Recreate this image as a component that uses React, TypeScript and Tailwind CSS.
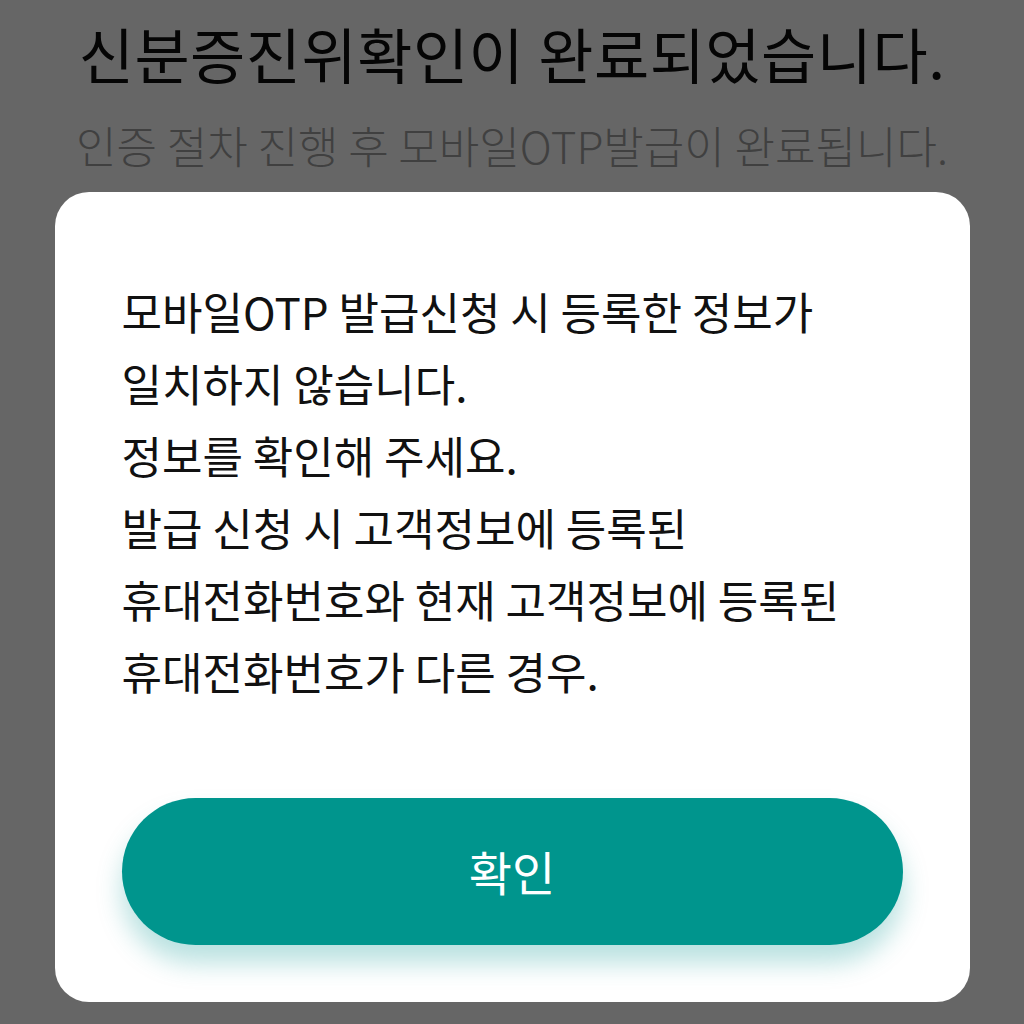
import React from "react";

export default function App() {
  const font = { fontFamily: '"Noto Sans CJK KR", "Noto Sans", sans-serif' };
  return (
    <div
      className="w-[1024px] h-[1024px] overflow-hidden bg-[#666666] flex flex-col items-center"
      style={font}
    >
      <h1 className="mt-[21px] text-[60px] leading-[64px] tracking-[0.5px] text-[#050505] font-normal whitespace-nowrap">
        신분증진위확인이 완료되었습니다.
      </h1>
      <p className="mt-[36px] text-[44px] leading-[48px] tracking-[0px] text-[#404040] font-light whitespace-nowrap">
        인증 절차 진행 후 모바일OTP발급이 완료됩니다.
      </p>
      <div className="mt-[23px] w-[915px] bg-white rounded-[34px] pt-[83px] pb-[57px] px-[67px] flex flex-col">
        <div className="text-[44px] leading-[72px] tracking-[0px] text-[#111111]">
          <p>모바일OTP 발급신청 시 등록한 정보가</p>
          <p>일치하지 않습니다.</p>
          <p>정보를 확인해 주세요.</p>
          <p>발급 신청 시 고객정보에 등록된</p>
          <p>휴대전화번호와 현재 고객정보에 등록된</p>
          <p>휴대전화번호가 다른 경우.</p>
        </div>
        <button className="mt-[91px] h-[147px] w-full rounded-full bg-[#00958d] text-white text-[47px] shadow-[0_18px_26px_rgba(0,149,143,0.28)] flex items-center justify-center">
          확인
        </button>
      </div>
    </div>
  );
}
